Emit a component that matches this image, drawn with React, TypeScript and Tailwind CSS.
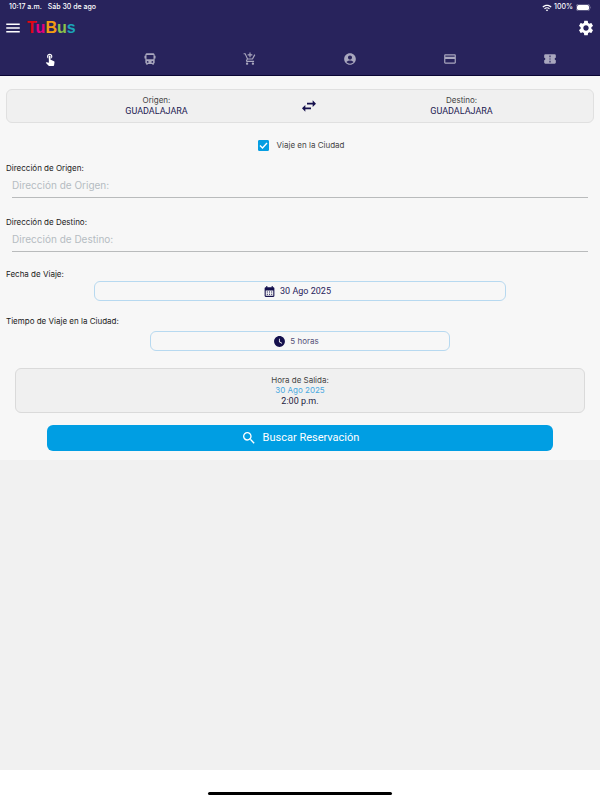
import { useState } from 'react';
import {
  MdAccountCircle,
  MdCreditCard,
  MdMenu,
  MdSearch,
  MdSettings,
  MdTouchApp,
  MdWatchLater,
  MdOutlineAddShoppingCart,
  MdCalendarMonth,
  MdWifi,
} from 'react-icons/md';

const logo = [
  ['T', 'text-[#e30613]'],
  ['u', 'text-[#e6007e]'],
  ['B', 'text-[#f39c12]'],
  ['u', 'text-[#8bc34a]'],
  ['s', 'text-[#1ba5b8]'],
];

function BusIcon() {
  return (
    <svg viewBox="0 0 24 24" className="size-3.5" fill="currentColor" fillRule="evenodd">
      <path d="M7.500 2h9C19 2 20 3 20 5v1.500h1.500V11H20v8l-1.500 1v2H16v-1.500H8V22H5.500v-2L4 19v-8H2.500V6.500H4V5c0-2 1-3 3.500-3zM6 5v7.500h12V5zm2 13.500a1.500 1.500 0 1 0 0-3 1.500 1.500 0 0 0 0 3zm8 0a1.500 1.500 0 1 0 0-3 1.500 1.500 0 0 0 0 3z" />
    </svg>
  );
}

function TicketIcon() {
  return (
    <svg viewBox="0 0 24 24" className="size-3.5" fill="currentColor">
      <path fillRule="evenodd" d="M4 4h16a2 2 0 0 1 2 2v4a2 2 0 0 0 0 4v4a2 2 0 0 1-2 2H4a2 2 0 0 1-2-2v-4a2 2 0 0 0 0-4V6a2 2 0 0 1 2-2zm7 2v3h2V6zm0 5v2h2v-2zm0 4v3h2v-3z" />
    </svg>
  );
}

function SwapIcon() {
  return (
    <svg viewBox="0 0 24 24" className="size-4" fill="currentColor">
      <path d="M22.500 8.500 17.500 3.500v3.700H9v2.600h8.500v3.700zM1.500 15.500 6.500 20.500v-3.700H15v-2.600H6.500v-3.700z" />
    </svg>
  );
}

const tabs = [
  { label: 'Reservar', icon: <MdTouchApp className="size-3.5" /> },
  { label: 'Viajes', icon: <BusIcon /> },
  { label: 'Carrito', icon: <MdOutlineAddShoppingCart className="size-3.5" /> },
  { label: 'Cuenta', icon: <MdAccountCircle className="size-3.5" /> },
  { label: 'Tarjetas', icon: <MdCreditCard className="size-3.5" /> },
  { label: 'Boletos', icon: <TicketIcon /> },
];

function Place({ label, city }: { label: string; city: string }) {
  return (
    <div className="flex-1 pb-px text-center">
      <div className="text-[8px] leading-[10px] text-[#444]">{label}</div>
      <div className="font-['Roboto',sans-serif] text-[9px] leading-[12px] text-[#1d1a52]">{city}</div>
    </div>
  );
}

function AddressField({ id, label }: { id: string; label: string }) {
  return (
    <div>
      <label htmlFor={id} className="block text-[8px] leading-[10px] text-[#222]">
        {label}
      </label>
      <div className="px-1.5">
        <input
          id={id}
          type="text"
          placeholder={label}
          className="block h-[25px] w-full border-b border-[#b9bbbc] bg-transparent text-[10px] text-[#222] outline-none placeholder:text-[#b5bcc2]"
        />
      </div>
    </div>
  );
}

export default function App() {
  const [active, setActive] = useState(0);
  const [inCity, setInCity] = useState(true);

  return (
    <div className="flex min-h-screen flex-col bg-[#f1f1f1] font-['Inter',sans-serif]">
      <header className="border-b border-[#0a0534] bg-[#28235c] text-white">
        <div className="flex h-3.5 items-center justify-between pt-px pr-2 pl-[9px] text-[7px] font-medium">
          <div className="flex gap-1.5">
            <span>10:17 a.m.</span>
            <span>Sáb 30 de ago</span>
          </div>
          <div className="flex items-center gap-0.5">
            <MdWifi className="size-2.5" />
            <span>100%</span>
            <svg viewBox="0 0 32 14" className="ml-px h-[7px] w-4">
              <rect x="0.500" y="0.500" width="27" height="13" rx="4" fill="none" stroke="#aaa8c3" />
              <rect x="2" y="2" width="24" height="10" rx="3" fill="white" />
              <path d="M29 5q2 2 0 4z" fill="#aaa8c3" />
            </svg>
          </div>
        </div>
        <div className="flex h-7 items-center pr-[5px] pl-1">
          <button type="button" aria-label="Menú">
            <MdMenu className="size-[18px]" />
          </button>
          <h1 className="ml-[5px] font-['Liberation_Sans',sans-serif] text-[16px] leading-5 font-bold">
            {logo.map(([letter, color], i) => (
              <span key={i} className={color}>{letter}</span>
            ))}
          </h1>
          <button type="button" aria-label="Configuración" className="ml-auto">
            <MdSettings className="size-[18px]" />
          </button>
        </div>
        <nav className="grid h-[33px] grid-cols-6">
          {tabs.map((tab, i) => (
            <button
              key={tab.label}
              type="button"
              aria-label={tab.label}
              onClick={() => setActive(i)}
              className={`flex items-center justify-center ${i === active ? 'text-white' : 'text-[#a9a7be]'}`}
            >
              {tab.icon}
            </button>
          ))}
        </nav>
      </header>

      <main className="bg-[#f7f7f7] px-1.5 pt-[13px] pb-[9px]">
        <section className="flex h-[34px] items-center rounded-md border border-[#e0e0e0] bg-[#f0f0f0] pl-[18px]">
          <Place label="Origen:" city="GUADALAJARA" />
          <button type="button" aria-label="Intercambiar" className="flex w-[42px] justify-center text-[#15104d]">
            <SwapIcon />
          </button>
          <Place label="Destino:" city="GUADALAJARA" />
        </section>

        <label className="mt-4 flex h-3 items-center justify-center gap-2 pl-0.5 text-[8px] text-[#444]">
          <span className="grid size-[11px] place-items-center">
            <input
              type="checkbox"
              checked={inCity}
              onChange={(e) => setInCity(e.target.checked)}
              className="col-start-1 row-start-1 size-[11px] appearance-none rounded-[1px] border border-[#069ee2] bg-white checked:bg-[#069ee2]"
            />
            {inCity && (
              <svg viewBox="0 0 11 11" className="pointer-events-none col-start-1 row-start-1 size-[11px]">
                <path d="M2 5.500 4.500 8 9 3" fill="none" stroke="white" strokeWidth="1.400" />
              </svg>
            )}
          </span>
          Viaje en la Ciudad
        </label>

        <div className="mt-3 flex flex-col gap-[19px]">
          <AddressField id="origen" label="Dirección de Origen:" />
          <AddressField id="destino" label="Dirección de Destino:" />
        </div>

        <div className="mt-[17px]">
          <div id="fecha" className="text-[8px] leading-[10px] text-[#222]">Fecha de Viaje:</div>
          <button
            type="button"
            aria-describedby="fecha"
            className="mx-auto mt-[2px] flex h-5 w-[70%] items-center justify-center gap-1 rounded-md border border-[#b7d9f0] pt-px pr-1.5 font-['Roboto',sans-serif] text-[9px] text-[#28235c]"
          >
            <MdCalendarMonth className="size-[13px] text-[#15104d]" />
            30 Ago 2025
          </button>
        </div>

        <div className="mt-[15px]">
          <div id="tiempo" className="text-[8px] leading-[10px] text-[#222]">Tiempo de Viaje en la Ciudad:</div>
          <button
            type="button"
            aria-describedby="tiempo"
            className="mx-auto mt-[5px] flex h-5 w-[51%] items-center justify-center gap-1 rounded-md border border-[#b7d9f0] pr-2 text-[8px] text-[#555178]"
          >
            <MdWatchLater className="size-[13px] text-[#15104d]" />
            5 horas
          </button>
        </div>

        <section className="mx-[9px] mt-[17px] flex h-[45px] flex-col justify-center rounded-md border border-[#dadada] bg-[#f0f0f0] text-center">
          <div className="text-[8px] leading-[10px] text-[#444]">Hora de Salida:</div>
          <div className="text-[8px] leading-[11px] text-[#4aa8e0]">30 Ago 2025</div>
          <div className="font-['Roboto',sans-serif] text-[9px] leading-[11px] text-[#1d1a40]">2:00 p.m.</div>
        </section>

        <button
          type="button"
          className="mx-auto mt-3 flex h-[26px] w-[86%] items-center justify-center gap-1.5 rounded-md bg-[#009ee3] font-['Roboto',sans-serif] text-[11px] text-white"
        >
          <MdSearch className="size-4" />
          Buscar Reservación
        </button>
      </main>

      <footer className="mt-auto flex h-[30px] items-end justify-center bg-white pb-[5px]">
        <div className="h-[3px] w-[184px] rounded-full bg-black" />
      </footer>
    </div>
  );
}
